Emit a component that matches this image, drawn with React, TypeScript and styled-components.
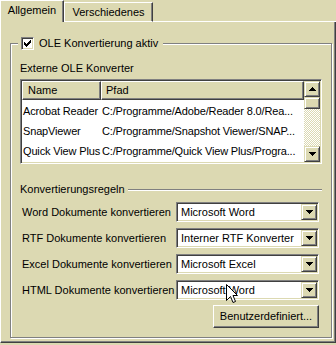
import React, { FC } from "react";
import styled, { createGlobalStyle } from "styled-components";

// Colours of the classic dialog scheme
const FACE = "#dcd9b2";
const LIGHT = "#ffffff";
const SHADOW = "#808080";
const DARK = "#404040";

const GlobalStyle = createGlobalStyle`
  html, body {
    margin: 0;
    padding: 0;
    background: ${FACE};
  }
  body {
    font-family: "Liberation Sans", Arial, sans-serif;
    font-size: 11px;
    line-height: 13px;
    color: #000;
  }
`;

const converters = [
  { name: "Acrobat Reader", path: "C:/Programme/Adobe/Reader 8.0/Rea..." },
  { name: "SnapViewer", path: "C:/Programme/Snapshot Viewer/SNAP..." },
  { name: "Quick View Plus", path: "C:/Programme/Quick View Plus/Progra..." },
];

const rules = [
  { label: "Word Dokumente konvertieren", value: "Microsoft Word" },
  { label: "RTF Dokumente konvertieren", value: "Interner RTF Konverter" },
  { label: "Excel Dokumente konvertieren", value: "Microsoft Excel" },
  { label: "HTML Dokumente konvertieren", value: "Microsoft Word", cursor: true },
];

const Arrow: FC<{ up?: boolean }> = ({ up }) => (
  <svg width="7" height="4" viewBox="0 0 7 4" shapeRendering="crispEdges">
    {up ? (
      <path d="M3 0h1v1h1v1h1v1h1v1H0V3h1V2h1V1h1z" fill="#000" />
    ) : (
      <path d="M0 0h7v1H6v1H5v1H4v1H3V3H2V2H1V1H0z" fill="#000" />
    )}
  </svg>
);

const Cursor: FC = () => (
  <svg width="12" height="19" viewBox="0 0 12 19">
    <path
      d="M0.5 0.5V16.5L4.5 12.5L7 18.5L9.5 17.5L7 11.5H11.5Z"
      fill="#fff"
      stroke="#000"
      strokeWidth="1"
      strokeLinejoin="miter"
    />
  </svg>
);

const App: FC = () => {
  return (
    <>
      <GlobalStyle />
      <Window>
        <TabStrip>
          <Tab $active $width={64}>Allgemein</Tab>
          <Tab $width={89}>Verschiedenes</Tab>
          <TabFiller />
        </TabStrip>
        <Panel>
          <GroupBox>
            <Legend>
              <CheckBox>
                <svg width="7" height="7" viewBox="0 0 7 7" shapeRendering="crispEdges">
                  <path
                    d="M6 0h1v3H6v1H5v1H4v1H3v1H2V6H1V5H0V2h1v1h1v1h1V3h1V2h1V1h1z"
                    fill="#000"
                  />
                </svg>
              </CheckBox>
              <span>OLE Konvertierung aktiv</span>
            </Legend>
            <Body>
              <Caption>Externe OLE Konverter</Caption>
              <ListView>
                <ListMain>
                  <HeaderRow>
                    <HeaderCell $width={79} $pad={5}>Name</HeaderCell>
                    <HeaderCell $pad={4}>Pfad</HeaderCell>
                  </HeaderRow>
                  <ListBody>
                    {converters.map((c) => (
                      <ListRow key={c.name}>
                        <Cell $width={79}>{c.name}</Cell>
                        <Cell>{c.path}</Cell>
                      </ListRow>
                    ))}
                  </ListBody>
                </ListMain>
                <ScrollBar>
                  <ScrollButton>
                    <Arrow up />
                  </ScrollButton>
                  <Thumb />
                  <Track />
                  <ScrollButton>
                    <Arrow />
                  </ScrollButton>
                </ScrollBar>
              </ListView>
              <Separator>
                <span>Konvertierungsregeln</span>
                <Rule />
              </Separator>
              <RuleGrid>
                {rules.map((r) => (
                  <React.Fragment key={r.label}>
                    <RuleLabel>{r.label}</RuleLabel>
                    <Select>
                      <SelectText>{r.value}</SelectText>
                      <DropButton>
                        <Arrow />
                      </DropButton>
                      {r.cursor && (
                        <CursorLayer>
                          <Cursor />
                        </CursorLayer>
                      )}
                    </Select>
                  </React.Fragment>
                ))}
              </RuleGrid>
              <PushButton type="button">Benutzerdefiniert...</PushButton>
            </Body>
          </GroupBox>
        </Panel>
      </Window>
    </>
  );
};

const raised = `
  border: 1px solid;
  border-color: ${FACE} ${DARK} ${DARK} ${FACE};
  box-shadow: inset 1px 1px 0 ${LIGHT}, inset -1px -1px 0 ${SHADOW};
  background: ${FACE};
`;

const sunken = `
  border: 1px solid;
  border-color: ${SHADOW} ${LIGHT} ${LIGHT} ${SHADOW};
  box-shadow: inset 1px 1px 0 ${DARK}, inset -1px -1px 0 ${FACE};
  background: #fff;
`;

const Window = styled.div`
  width: 336px;
  height: 345px;
  overflow: hidden;
  display: flex;
  flex-direction: column;
  background: ${FACE};
`;

const TabStrip = styled.div`
  display: flex;
  align-items: flex-end;
  height: 22px;
`;

const Tab = styled.div<{ $active?: boolean; $width: number }>`
  box-sizing: border-box;
  width: ${(p) => p.$width}px;
  height: ${(p) => (p.$active ? 22 : 20)}px;
  display: flex;
  align-items: center;
  justify-content: center;
  padding-bottom: ${(p) => (p.$active ? 3 : 0)}px;
  border-top: 1px solid ${LIGHT};
  border-left: 1px solid ${LIGHT};
  border-right: 1px solid ${DARK};
  border-bottom: ${(p) => (p.$active ? "none" : `1px solid ${LIGHT}`)};
  box-shadow: inset -1px 0 0 ${SHADOW};
  white-space: nowrap;
`;

const TabFiller = styled.div`
  flex: 1;
  border-bottom: 1px solid ${LIGHT};
`;

const Panel = styled.div`
  box-sizing: border-box;
  height: 321px;
  padding: 15px 0 0 9px;
  border-left: 1px solid ${LIGHT};
  border-right: 1px solid ${DARK};
  border-bottom: 1px solid ${DARK};
  box-shadow: inset -1px -1px 0 ${SHADOW};
`;

const GroupBox = styled.fieldset`
  box-sizing: border-box;
  width: 322px;
  min-width: 0;
  margin: 0;
  padding: 12px 9px 9px 9px;
  border: 1px solid ${SHADOW};
  box-shadow: inset 1px 1px 0 ${LIGHT}, 1px 1px 0 ${LIGHT};
`;

const Legend = styled.legend`
  display: flex;
  align-items: center;
  gap: 5px;
  margin-left: -2px;
  padding: 0 5px 0 3px;
  background: ${FACE};
`;

const CheckBox = styled.span`
  box-sizing: border-box;
  width: 13px;
  height: 13px;
  display: flex;
  align-items: center;
  justify-content: center;
  ${sunken}
`;

const Body = styled.div`
  display: flex;
  flex-direction: column;
`;

const Caption = styled.div`
  white-space: nowrap;
`;

const ListView = styled.div`
  box-sizing: border-box;
  height: 85px;
  margin-top: 4px;
  padding: 1px;
  display: flex;
  ${sunken}
`;

const ListMain = styled.div`
  flex: 1;
  min-width: 0;
  display: flex;
  flex-direction: column;
`;

const HeaderRow = styled.div`
  display: flex;
  height: 19px;
`;

const HeaderCell = styled.div<{ $width?: number; $pad: number }>`
  box-sizing: border-box;
  ${(p) => (p.$width ? `width: ${p.$width}px;` : "flex: 1;")}
  display: flex;
  align-items: center;
  padding-left: ${(p) => p.$pad}px;
  ${raised}
  border-color: ${LIGHT} ${DARK} ${DARK} ${LIGHT};
  box-shadow: inset -1px -1px 0 ${SHADOW};
`;

const ListBody = styled.div`
  padding-top: 1px;
`;

const ListRow = styled.div`
  display: flex;
  height: 20px;
  align-items: center;
  letter-spacing: -0.15px;
`;

const Cell = styled.div<{ $width?: number }>`
  box-sizing: border-box;
  ${(p) => (p.$width ? `width: ${p.$width}px;` : "flex: 1;")}
  padding-left: 1px;
  white-space: nowrap;
  overflow: hidden;
`;

const ScrollBar = styled.div`
  width: 16px;
  display: flex;
  flex-direction: column;
`;

const ScrollButton = styled.div`
  box-sizing: border-box;
  height: 16px;
  display: flex;
  align-items: center;
  justify-content: center;
  ${raised}
`;

const Thumb = styled.div`
  box-sizing: border-box;
  height: 12px;
  ${raised}
`;

const Track = styled.div`
  flex: 1;
  background: repeating-conic-gradient(${LIGHT} 0 25%, ${FACE} 0 50%) 0 0 / 2px 2px;
`;

const Separator = styled.div`
  display: flex;
  align-items: center;
  margin-top: 19px;
  white-space: nowrap;
`;

const Rule = styled.div`
  flex: 1;
  margin-left: 3px;
  border-top: 1px solid ${SHADOW};
  border-bottom: 1px solid ${LIGHT};
`;

const RuleGrid = styled.div`
  display: grid;
  grid-template-columns: 156px 143px;
  grid-auto-rows: 20px;
  row-gap: 6px;
  align-items: center;
  margin-top: 6px;
`;

const RuleLabel = styled.div`
  padding-left: 2px;
  white-space: nowrap;
`;

const Select = styled.div`
  position: relative;
  box-sizing: border-box;
  height: 20px;
  padding: 1px;
  display: flex;
  align-items: center;
  ${sunken}
`;

const SelectText = styled.span`
  flex: 1;
  padding-left: 3px;
  white-space: nowrap;
  overflow: hidden;
`;

const DropButton = styled.div`
  box-sizing: border-box;
  width: 16px;
  height: 16px;
  display: flex;
  align-items: center;
  justify-content: center;
  ${raised}
`;

const CursorLayer = styled.div`
  position: absolute;
  left: 49px;
  top: 3px;
  line-height: 0;
`;

const PushButton = styled.button`
  align-self: flex-end;
  box-sizing: border-box;
  width: 106px;
  height: 23px;
  margin: 5px 3px 0 0;
  padding: 0;
  font: inherit;
  color: #000;
  background: ${FACE};
  border: 1px solid;
  border-color: ${LIGHT} ${DARK} ${DARK} ${LIGHT};
  box-shadow: inset -1px -1px 0 ${SHADOW};
`;

export default App;
